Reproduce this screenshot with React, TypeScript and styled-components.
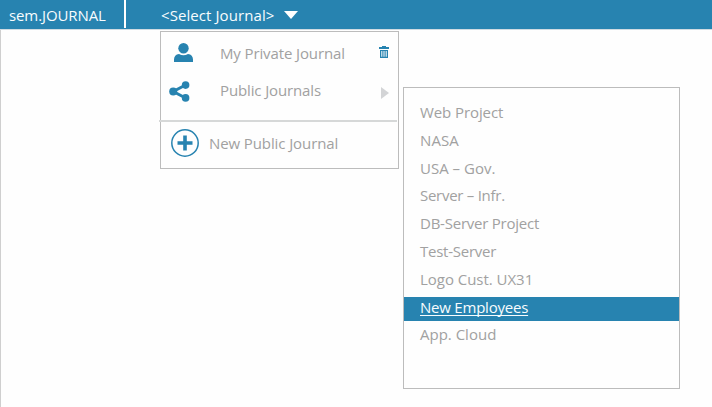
import React from "react";
import styled, { createGlobalStyle } from "styled-components";

const BLUE = "#2783b0";
const GREY_TEXT = "#a1a1a1";
const BORDER = "#bcbcbc";

const GlobalStyle = createGlobalStyle`
  * { box-sizing: border-box; }
  body { margin: 0; background: #fefefe; }
`;

const Page = styled.div`
  display: flex;
  flex-direction: column;
  height: 407px;
  overflow: hidden;
  font-family: "Open Sans", "Noto Sans", sans-serif;
  font-size: 15px;
  color: ${GREY_TEXT};
`;

const Header = styled.header`
  display: flex;
  flex: none;
  height: 30px;
  background: ${BLUE};
  border-bottom: 1px solid #cfdbe2;
  color: #f8fcfe;
`;

const Brand = styled.div`
  width: 126px;
  height: 28px;
  padding-left: 9px;
  border-right: 2px solid #fff;
  line-height: 31px;
`;

const Selector = styled.div`
  display: flex;
  align-items: center;
  height: 29px;
  padding-left: 35px;
  line-height: 29px;
`;

const Text = styled.span<{ $spacing?: number }>`
  white-space: pre;
  letter-spacing: ${(p) => p.$spacing ?? 0}px;
`;

const SelectedText = styled(Text)`
  padding-top: 2px;
`;

const Caret = styled.svg`
  margin-left: 10px;
`;

const Body = styled.main`
  display: flex;
  flex: 1;
  align-items: flex-start;
  border-left: 1px solid #cfcfcf;
`;

const Menu = styled.div`
  flex: none;
  width: 239px;
  height: 138px;
  margin: 1px 0 0 159px;
  border: 1px solid ${BORDER};
`;

const MenuRow = styled.div<{ $height: number; $inset: number; $iconColumn: number }>`
  display: grid;
  grid-template-columns: ${(p) => p.$iconColumn}px 1fr 19px;
  align-items: center;
  height: ${(p) => p.$height}px;
  padding-left: ${(p) => p.$inset}px;
  line-height: 22px;
`;

const MenuLabel = styled(Text)`
  padding-bottom: 2px;
`;

const Icon = styled.svg<{ $raise?: number; $lower?: number; $indent?: number }>`
  display: block;
  overflow: visible;
  margin: ${(p) => p.$lower ?? 0}px 0 ${(p) => p.$raise ?? 0}px ${(p) => p.$indent ?? 0}px;
`;

const Divider = styled.div`
  width: 238px;
  height: 2px;
  margin: 14px 0 0 -2px;
  background: #d6d8d8;
`;

const Submenu = styled.div`
  flex: none;
  width: 277px;
  height: 302px;
  margin: 57px 0 0 4px;
  padding-top: 14px;
  border: 1px solid ${BORDER};
`;

const Item = styled.div<{ $gap: number; $active?: boolean }>`
  height: 24px;
  margin-bottom: ${(p) => p.$gap}px;
  padding-left: 16px;
  line-height: 20px;
  color: ${(p) => (p.$active ? "#f8fcfe" : GREY_TEXT)};
  background: ${(p) => (p.$active ? BLUE : "transparent")};
  text-decoration: ${(p) => (p.$active ? "underline" : "none")};
  text-decoration-skip-ink: none;
  text-decoration-thickness: 1px;
  text-underline-offset: 2px;
`;

const projects = [
  { name: "Web Project", spacing: -0.09, gap: 4 },
  { name: "NASA", spacing: 0.1, gap: 4 },
  { name: "USA – Gov.", spacing: 0.02, gap: 3 },
  { name: "Server – Infr.", spacing: -0.27, gap: 4 },
  { name: "DB-Server Project", spacing: -0.23, gap: 4 },
  { name: "Test-Server", spacing: -0.25, gap: 4 },
  { name: "Logo Cust. UX31", spacing: -0.03, gap: 4 },
  { name: "New Employees", spacing: -0.22, gap: 3, active: true },
  { name: "App. Cloud", spacing: 0, gap: 0 },
];

export default function App() {
  return (
    <Page>
      <GlobalStyle />
      <Header>
        <Brand>
          <Text $spacing={-0.1}>sem.JOURNAL</Text>
        </Brand>
        <Selector>
          <SelectedText $spacing={0.08}>{"<Select Journal>"}</SelectedText>
          <Caret width="14" height="8" viewBox="0 0 14 8">
            <path d="M0 0H14L7 8Z" fill="#fff" />
          </Caret>
        </Selector>
      </Header>
      <Body>
        <Menu>
          <MenuRow $height={44} $inset={13} $iconColumn={46}>
            <Icon $raise={3} width="19" height="19" viewBox="0 0 19 19" fill={BLUE}>
              <circle cx="9.5" cy="5.2" r="5.2" />
              <path d="M0 19V16.5C0 13.5 1.8 11.4 5 11Q9.5 13.6 14 11C17.2 11.4 19 13.5 19 16.5V19Z" />
            </Icon>
            <MenuLabel $spacing={-0.12}>My Private Journal</MenuLabel>
            <Icon $raise={4} width="10" height="12" viewBox="0 0 10 12" fill={BLUE}>
              <path d="M3 0H7V1H10V3H0V1H3Z" />
              <path fillRule="evenodd" d="M1 4H9V12H1ZM2.3 5V10.7H3.3V5ZM4.5 5V10.7H5.5V5ZM6.7 5V10.7H7.7V5Z" />
            </Icon>
          </MenuRow>
          <MenuRow $height={30} $inset={8} $iconColumn={51}>
            <Icon $lower={1} width="21" height="21" viewBox="0 0 21 21">
              <path d="M16.5 4L4.3 10.5L16.5 17" fill="none" stroke={BLUE} strokeWidth="3" />
              <g fill={BLUE}>
                <circle cx="16.6" cy="4.1" r="3.8" />
                <circle cx="4.2" cy="10.5" r="4" />
                <circle cx="16.6" cy="16.9" r="3.8" />
              </g>
            </Icon>
            <MenuLabel $spacing={-0.13}>Public Journals</MenuLabel>
            <Icon $lower={4} $indent={2} width="8" height="12" viewBox="0 0 8 12">
              <path d="M0 0L8 6L0 12Z" fill="#d3d4d6" />
            </Icon>
          </MenuRow>
          <Divider />
          <MenuRow $height={44} $inset={10} $iconColumn={38}>
            <Icon $raise={2} width="28" height="28" viewBox="0 0 28 28" fill="none" stroke={BLUE}>
              <circle cx="14" cy="14" r="13.2" strokeWidth="1.5" />
              <path d="M14 6.5V21.5M6.5 14H21.5" strokeWidth="3.6" />
            </Icon>
            <MenuLabel $spacing={-0.1}>New Public Journal</MenuLabel>
          </MenuRow>
        </Menu>
        <Submenu>
          {projects.map((p) => (
            <Item key={p.name} $gap={p.gap} $active={p.active}>
              <Text $spacing={p.spacing}>{p.name}</Text>
            </Item>
          ))}
        </Submenu>
      </Body>
    </Page>
  );
}
